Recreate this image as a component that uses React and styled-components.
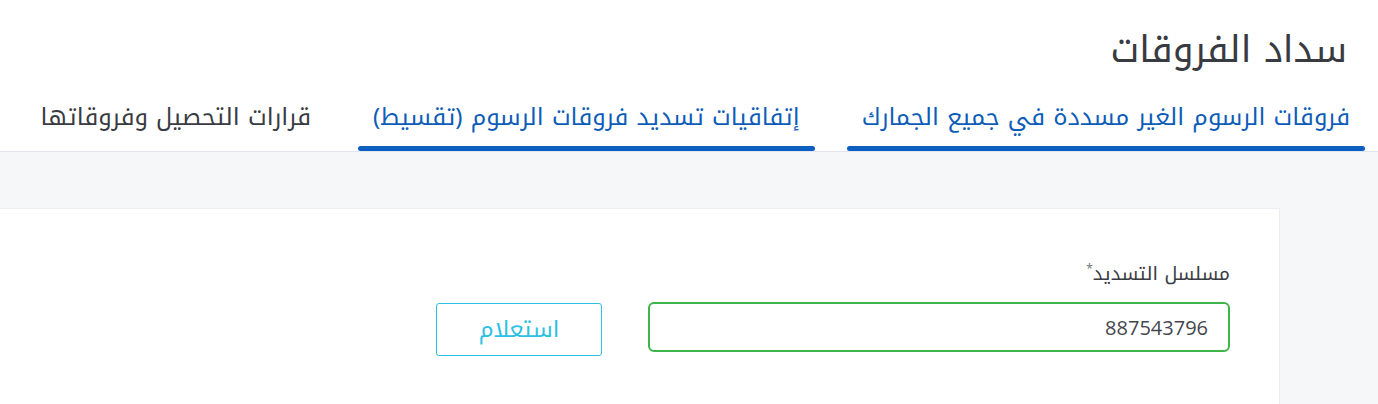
import styled, { createGlobalStyle } from "styled-components";

const GlobalStyle = createGlobalStyle`
  html, body {
    margin: 0;
    padding: 0;
    background: #ffffff;
  }
  body {
    font-family: "Noto Kufi Arabic", "Noto Sans Arabic", "DejaVu Sans", sans-serif;
  }
`;

const tabs = [
  { label: "فروقات الرسوم الغير مسددة في جميع الجمارك", active: true },
  { label: "إتفاقيات تسديد فروقات الرسوم (تقسيط)", active: true },
  { label: "قرارات التحصيل وفروقاتها", active: false },
];

export default function App() {
  return (
    <Page dir="rtl">
      <GlobalStyle />
      <Header>
        <Title>سداد الفروقات</Title>
        <TabBar>
          {tabs.map((t) => (
            <Tab key={t.label} $active={t.active}>
              <TabLabel>{t.label}</TabLabel>
              <Underline $active={t.active} />
            </Tab>
          ))}
        </TabBar>
      </Header>
      <Body>
        <Card>
          <FormRow>
            <Field>
              <Label>
                مسلسل التسديد<Star>*</Star>
              </Label>
              <Input defaultValue="887543796" dir="rtl" />
            </Field>
            <SubmitButton>استعلام</SubmitButton>
          </FormRow>
        </Card>
      </Body>
    </Page>
  );
}

const Page = styled.div`
  width: 1378px;
  height: 404px;
  overflow: hidden;
  background: #f6f7f9;
`;

const Header = styled.div`
  background: #ffffff;
  border-bottom: 1px solid #e3e6ee;
  padding: 24px 13px 0 0;
`;

const Title = styled.h1`
  margin: 0 18px 0 0;
  font-size: 37px;
  font-weight: 400;
  color: #383b41;
  line-height: 52px;
`;

const TabBar = styled.div`
  display: flex;
  gap: 32px;
  margin-top: 21px;
`;

const Tab = styled.div`
  display: flex;
  flex-direction: column;
  gap: 9px;
  color: ${({ $active }) => ($active ? "#0d5db8" : "#383b41")};
`;

const TabLabel = styled.span`
  padding: 0 15px;
  font-size: 24px;
  line-height: 40px;
  white-space: nowrap;
`;

const Underline = styled.div`
  height: 5px;
  border-radius: 3px;
  background: ${({ $active }) => ($active ? "#0a5fc0" : "transparent")};
`;

const Body = styled.div`
  padding: 56px 98px 0 0;
`;

const Card = styled.div`
  background: #ffffff;
  border-top: 1px solid #eceef3;
  border-right: 1px solid #eceef3;
  height: 200px;
  padding: 48px 49px 0 0;
`;

const FormRow = styled.div`
  display: flex;
  align-items: flex-end;
  gap: 46px;
`;

const Field = styled.div`
  display: flex;
  flex-direction: column;
  width: 582px;
`;

const Label = styled.label`
  font-size: 19px;
  line-height: 24px;
  color: #383b41;
  margin-bottom: 16px;
`;

const Star = styled.span`
  font-size: 12px;
  color: #777;
  vertical-align: super;
`;

const Input = styled.input`
  box-sizing: border-box;
  height: 50px;
  width: 100%;
  border: 2px solid #3db54a;
  border-radius: 6px;
  padding: 0 20px;
  font-family: "Open Sans", "Noto Sans", sans-serif;
  font-size: 20px;
  color: #44474d;
  text-align: right;
  outline: none;
`;

const SubmitButton = styled.button`
  width: 166px;
  height: 53px;
  margin-bottom: -4px;
  background: #ffffff;
  border: 1.5px solid #2cc1e3;
  border-radius: 3px;
  color: #2cc1e3;
  font-family: "Noto Kufi Arabic", "Noto Sans Arabic", "DejaVu Sans", sans-serif;
  font-size: 23px;
`;
